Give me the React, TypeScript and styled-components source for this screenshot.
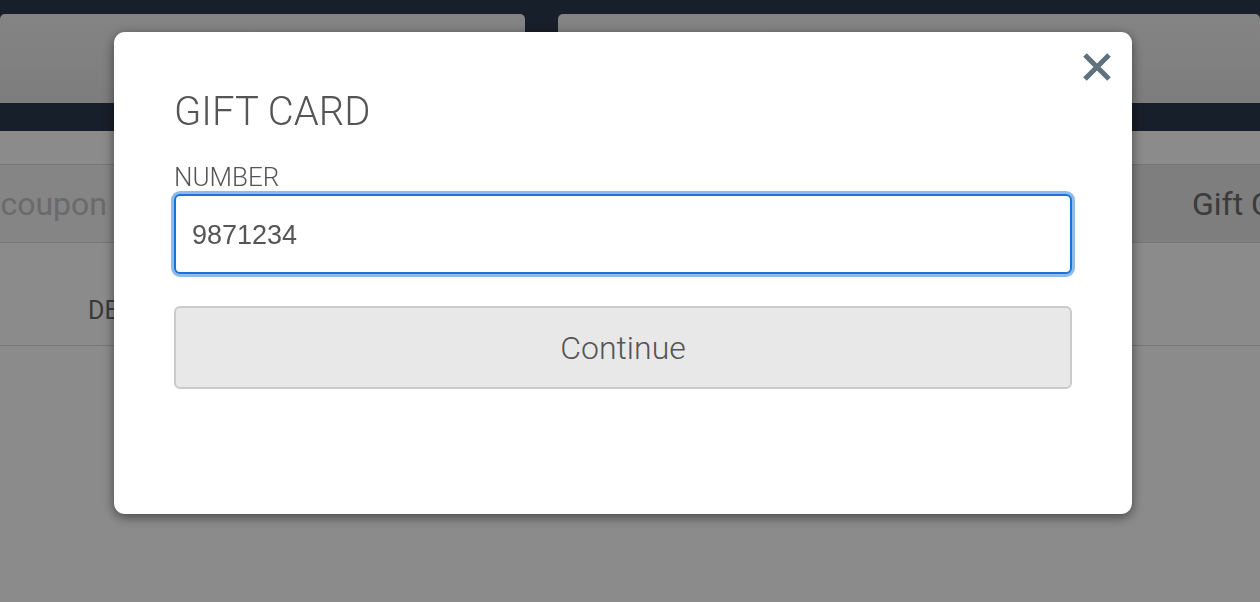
import React, { useState } from 'react';
import styled, { createGlobalStyle } from 'styled-components';

const GlobalStyle = createGlobalStyle`
  html, body {
    margin: 0;
    padding: 0;
    background: #ffffff;
    font-family: Roboto, "Liberation Sans", Arial, sans-serif;
  }
  * {
    box-sizing: border-box;
  }
`;

const Page = styled.div`
  width: 1260px;
  height: 602px;
  overflow: hidden;
  background: #ffffff;
`;

const TopStrip = styled.div`
  height: 14px;
  background: #2a394d;
`;

const TabRow = styled.div`
  display: flex;
  gap: 33px;
  height: 89px;
  background: #2a394d;
`;

const Tab = styled.div<{ $width?: number }>`
  flex: ${({ $width }) => ($width ? `0 0 ${$width}px` : '1')};
  border-radius: 5px 5px 0 0;
  background: linear-gradient(#f2f2f2, #e6e6e6);
`;

const NavBar = styled.div`
  height: 28px;
  background: #2a394d;
`;

const Section = styled.div`
  margin-top: 33px;
  border-top: 1px solid #d9d9d9;
`;

const SegmentRow = styled.div`
  display: flex;
  height: 78px;
  border-bottom: 1px solid #d9d9d9;
  background: #f5f5f5;
`;

const Segment = styled.div<{ $active?: boolean; $width?: number }>`
  display: flex;
  align-items: center;
  justify-content: ${({ $active }) => ($active ? 'flex-start' : 'flex-end')};
  flex: ${({ $width }) => ($width ? `0 0 ${$width}px` : '1')};
  overflow: hidden;
  white-space: nowrap;
  padding: ${({ $active }) => ($active ? '0 0 0 72px' : '0 13px 0 0')};
  background: ${({ $active }) => ($active ? '#e8e8e8' : 'transparent')};
  color: ${({ $active }) => ($active ? '#6c6c6c' : '#c2c2c2')};
  font-size: 32px;
  font-weight: 400;
`;

const InfoRow = styled.div`
  display: flex;
  align-items: center;
  height: 103px;
  border-bottom: 1px solid #d9d9d9;
  padding-left: 88px;
  padding-top: 32px;
  white-space: nowrap;
  color: #6a6a6a;
  font-size: 25px;
`;

const Overlay = styled.div`
  position: fixed;
  inset: 0;
  background: rgba(0, 0, 0, 0.455);
  padding: 32px 0 0 114px;
`;

const Modal = styled.div`
  position: relative;
  width: 1018px;
  padding: 60px 60px 125px;
  background: #ffffff;
  border-radius: 11px;
  box-shadow: 0 3px 12px rgba(0, 0, 0, 0.5);
  display: flex;
  flex-direction: column;
`;

const CloseButton = styled.button`
  position: absolute;
  top: 20px;
  right: 20px;
  width: 30px;
  height: 30px;
  padding: 0;
  border: none;
  background: none;
  color: #5d727c;
  cursor: pointer;
`;

const Title = styled.h2`
  margin: 0;
  font-size: 40px;
  line-height: 40px;
  font-weight: 300;
  color: #555555;
`;

const Label = styled.label`
  margin-top: 32px;
  font-size: 26px;
  line-height: 26px;
  font-weight: 300;
  color: #555555;
`;

const Input = styled.input`
  margin-top: 4px;
  height: 80px;
  width: 100%;
  padding: 2px 16px 0;
  border: 2px solid #1b73d8;
  border-radius: 6px;
  box-shadow: 0 0 0 3px #8dbbec;
  outline: none;
  font-family: "Liberation Sans", Arial, sans-serif;
  font-size: 27px;
  color: #555555;
`;

const ContinueButton = styled.button`
  margin-top: 32px;
  height: 83px;
  width: 100%;
  border: 2px solid #cbcbcb;
  border-radius: 6px;
  background: #e8e8e8;
  font-family: Roboto, "Liberation Sans", Arial, sans-serif;
  font-size: 32px;
  font-weight: 300;
  color: #555555;
  cursor: pointer;
`;

const CloseIcon = () => (
  <svg width="30" height="30" viewBox="0 0 30 30" fill="none">
    <path d="M3 3 L27 27 M27 3 L3 27" stroke="currentColor" strokeWidth="5" />
  </svg>
);

const App = () => {
  const [number, setNumber] = useState('9871234');

  return (
    <>
      <GlobalStyle />
      <Page>
        <TopStrip />
        <TabRow>
          <Tab $width={525} />
          <Tab />
        </TabRow>
        <NavBar />
        <Section>
          <SegmentRow>
            <Segment $width={120}>coupon</Segment>
            <Segment />
            <Segment $active $width={140}>Gift Card</Segment>
          </SegmentRow>
          <InfoRow>DELIVERY</InfoRow>
        </Section>
      </Page>
      <Overlay>
        <Modal>
          <CloseButton aria-label="Close">
            <CloseIcon />
          </CloseButton>
          <Title>GIFT CARD</Title>
          <Label htmlFor="gift-number">NUMBER</Label>
          <Input
            id="gift-number"
            value={number}
            onChange={(e) => setNumber(e.target.value)}
          />
          <ContinueButton>Continue</ContinueButton>
        </Modal>
      </Overlay>
    </>
  );
};

export default App;
